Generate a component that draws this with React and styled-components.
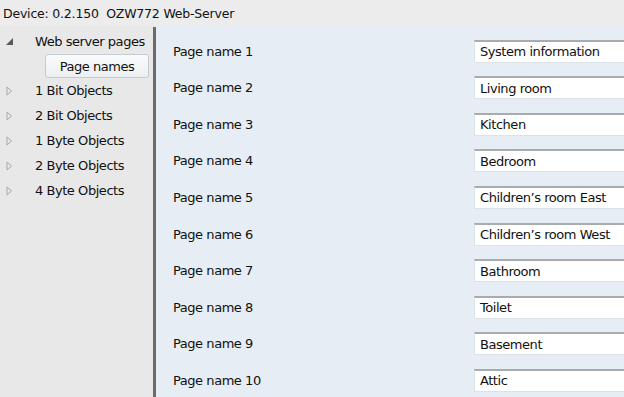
import styled, { createGlobalStyle } from "styled-components";

const GlobalStyle = createGlobalStyle`
  html, body {
    margin: 0;
    padding: 0;
    overflow: hidden;
  }
  body {
    font-family: "DejaVu Sans", Verdana, sans-serif;
    color: #111;
    background: #e8e8e8;
  }
`;

const Frame = styled.div`
  width: 624px;
  height: 397px;
  display: grid;
  grid-template-rows: 26px 1fr;
  overflow: hidden;
`;

const TitleBar = styled.div`
  display: flex;
  align-items: center;
  padding-left: 3px;
  background: #ececec;
  font-size: 12.5px;
  letter-spacing: -0.2px;
  white-space: pre;
`;

const Body = styled.div`
  display: grid;
  grid-template-columns: 153px 3px 1fr;
  min-height: 0;
`;

const Sidebar = styled.div`
  background: #e8e8e8;
  padding-top: 3px;
  display: flex;
  flex-direction: column;
`;

const Divider = styled.div`
  background: #6b6b6b;
  margin-top: 1px;
`;

const TreeItem = styled.div`
  display: flex;
  align-items: center;
  height: 25px;
  font-size: 13px;
  letter-spacing: -0.45px;
  white-space: nowrap;
`;

const Toggle = styled.span`
  width: 35px;
  flex: none;
  display: flex;
  align-items: center;
  padding-left: 6px;
  box-sizing: border-box;
`;

const PageButton = styled.div`
  margin: 0 4px 0 45px;
  height: 24px;
  box-sizing: border-box;
  border: 1px solid #c3cbd3;
  border-radius: 3px;
  background: linear-gradient(#fbfbfb, #eceff2);
  display: flex;
  align-items: center;
  justify-content: center;
  font-size: 13px;
  letter-spacing: -0.45px;
`;

const Content = styled.div`
  background: #e6edf4;
  padding: 7px 0 0 17px;
  display: grid;
  grid-template-columns: 301px 1fr;
  grid-auto-rows: 36.56px;
  align-items: center;
`;

const Label = styled.div`
  font-size: 13px;
  letter-spacing: -0.45px;
  white-space: nowrap;
`;

const Field = styled.div`
  height: 23px;
  box-sizing: border-box;
  background: #fff;
  border: 1px solid #dbe2e8;
  border-top: 2px solid #a9acaf;
  border-right: none;
  padding-left: 5px;
  display: flex;
  align-items: center;
  font-size: 13px;
  letter-spacing: -0.45px;
  white-space: nowrap;
`;

function Arrow({ open }) {
  return open ? (
    <svg width="8" height="8" viewBox="0 0 8 8">
      <path d="M7 0 L7 7 L0 7 Z" fill="#595959" />
    </svg>
  ) : (
    <svg width="7" height="10" viewBox="0 0 7 10">
      <path d="M1 1 L5.5 5 L1 9 Z" fill="none" stroke="#a8a8a8" strokeWidth="1" />
    </svg>
  );
}

const objects = [
  "1 Bit Objects",
  "2 Bit Objects",
  "1 Byte Objects",
  "2 Byte Objects",
  "4 Byte Objects",
];

const pages = [
  "System information",
  "Living room",
  "Kitchen",
  "Bedroom",
  "Children\u2019s room East",
  "Children\u2019s room West",
  "Bathroom",
  "Toilet",
  "Basement",
  "Attic",
];

export default function App() {
  return (
    <>
      <GlobalStyle />
      <Frame>
        <TitleBar>Device: 0.2.150  OZW772 Web-Server</TitleBar>
        <Body>
          <Sidebar>
            <TreeItem>
              <Toggle>
                <Arrow open />
              </Toggle>
              Web server pages
            </TreeItem>
            <PageButton>Page names</PageButton>
            {objects.map((name) => (
              <TreeItem key={name}>
                <Toggle>
                  <Arrow />
                </Toggle>
                {name}
              </TreeItem>
            ))}
          </Sidebar>
          <Divider />
          <Content>
            {pages.map((value, i) => [
              <Label key={"l" + i}>Page name {i + 1}</Label>,
              <Field key={"f" + i}>{value}</Field>,
            ])}
          </Content>
        </Body>
      </Frame>
    </>
  );
}
